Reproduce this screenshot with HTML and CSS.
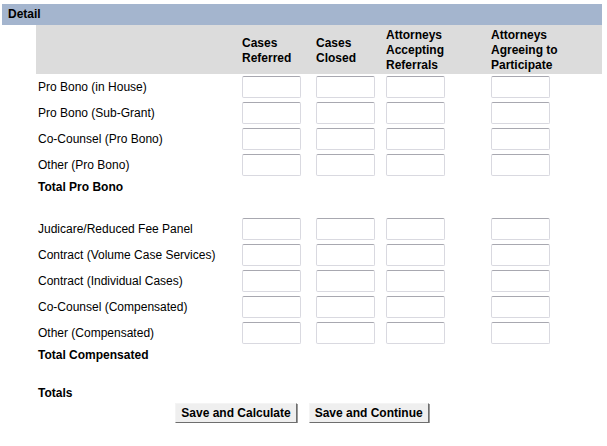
FILE: index.html
```html
<!DOCTYPE html>
<html>
<head>
<meta charset="utf-8">
<link rel="stylesheet" href="styles.css">
</head>
<body>
<div class="panel">
  <div class="panel-title">Detail</div>
  <table class="grid">
    <colgroup>
      <col class="c-label"><col class="c-ref"><col class="c-closed"><col class="c-accept"><col class="c-agree">
    </colgroup>
    <thead>
      <tr class="head">
        <th></th>
        <th>Cases<br>Referred</th>
        <th>Cases<br>Closed</th>
        <th>Attorneys<br>Accepting<br>Referrals</th>
        <th>Attorneys<br>Agreeing to<br>Participate</th>
      </tr>
    </thead>
    <tbody>
      <tr class="row"><td class="label">Pro Bono (in House)</td><td><input class="box"></td><td><input class="box"></td><td><input class="box"></td><td><input class="box"></td></tr>
      <tr class="row"><td class="label">Pro Bono (Sub-Grant)</td><td><input class="box"></td><td><input class="box"></td><td><input class="box"></td><td><input class="box"></td></tr>
      <tr class="row"><td class="label">Co-Counsel (Pro Bono)</td><td><input class="box"></td><td><input class="box"></td><td><input class="box"></td><td><input class="box"></td></tr>
      <tr class="row"><td class="label">Other (Pro Bono)</td><td><input class="box"></td><td><input class="box"></td><td><input class="box"></td><td><input class="box"></td></tr>
      <tr class="total"><td class="label">Total Pro Bono</td><td></td><td></td><td></td><td></td></tr>
      <tr class="spacer"><td colspan="5"></td></tr>
      <tr class="row"><td class="label">Judicare/Reduced Fee Panel</td><td><input class="box"></td><td><input class="box"></td><td><input class="box"></td><td><input class="box"></td></tr>
      <tr class="row"><td class="label">Contract (Volume Case Services)</td><td><input class="box"></td><td><input class="box"></td><td><input class="box"></td><td><input class="box"></td></tr>
      <tr class="row"><td class="label">Contract (Individual Cases)</td><td><input class="box"></td><td><input class="box"></td><td><input class="box"></td><td><input class="box"></td></tr>
      <tr class="row"><td class="label">Co-Counsel (Compensated)</td><td><input class="box"></td><td><input class="box"></td><td><input class="box"></td><td><input class="box"></td></tr>
      <tr class="row"><td class="label">Other (Compensated)</td><td><input class="box"></td><td><input class="box"></td><td><input class="box"></td><td><input class="box"></td></tr>
      <tr class="total"><td class="label">Total Compensated</td><td></td><td></td><td></td><td></td></tr>
      <tr class="spacer"><td colspan="5"></td></tr>
      <tr class="total"><td class="label">Totals</td><td></td><td></td><td></td><td></td></tr>
    </tbody>
  </table>
  <div class="actions">
    <button class="btn" type="button">Save and Calculate</button>
    <button class="btn" type="button">Save and Continue</button>
  </div>
</div>
</body>
</html>
```

FILE: styles.css
```css
html, body {
  margin: 0;
  padding: 0;
  background: #ffffff;
}

body {
  font-family: "Liberation Sans", Arial, sans-serif;
  font-size: 12px;
  color: #000000;
}

.panel {
  width: 600px;
  margin: 4px 0 0 2px;
}

.panel-title {
  height: 21px;
  line-height: 21px;
  padding-left: 6px;
  background: #a4b5ce;
  font-weight: bold;
}

.grid {
  margin-left: 34px;
  width: 566px;
  border-collapse: collapse;
  table-layout: fixed;
}

.c-label { width: 204px; }
.c-ref { width: 74px; }
.c-closed { width: 70px; }
.c-accept { width: 105px; }
.c-agree { width: 113px; }

.grid td,
.grid th {
  padding: 0 2px;
  vertical-align: middle;
  text-align: left;
}

.head th {
  background: #dcdcdc;
  font-weight: bold;
  line-height: 15px;
  height: 45px;
  padding: 3px 2px 1px 2px;
}

.row td {
  height: 22px;
  padding-top: 2px;
  padding-bottom: 2px;
}

.label {
  white-space: nowrap;
}

.total td {
  height: 18px;
  font-weight: bold;
}

.spacer td {
  height: 20px;
}

.box {
  display: block;
  box-sizing: border-box;
  width: 59px;
  height: 22px;
  margin: 0;
  padding: 0 3px;
  border: 1px solid #d9d9e0;
  border-top-color: #a8a8b0;
  border-radius: 2px;
  background: #ffffff;
  font: inherit;
}

.actions {
  display: flex;
  justify-content: center;
  gap: 12px;
  margin-top: 1px;
}

.btn {
  box-sizing: border-box;
  height: 20px;
  padding: 0 5px;
  margin: 0;
  font-family: "Liberation Sans", Arial, sans-serif;
  font-size: 12px;
  font-weight: bold;
  color: #000000;
  background: #efefef;
  border: 1px solid;
  border-color: #f4f4f4 #6e6e6e #6e6e6e #f4f4f4;
  box-shadow: 1px 1px 0 #9a9a9a;
  border-radius: 0;
}
```
